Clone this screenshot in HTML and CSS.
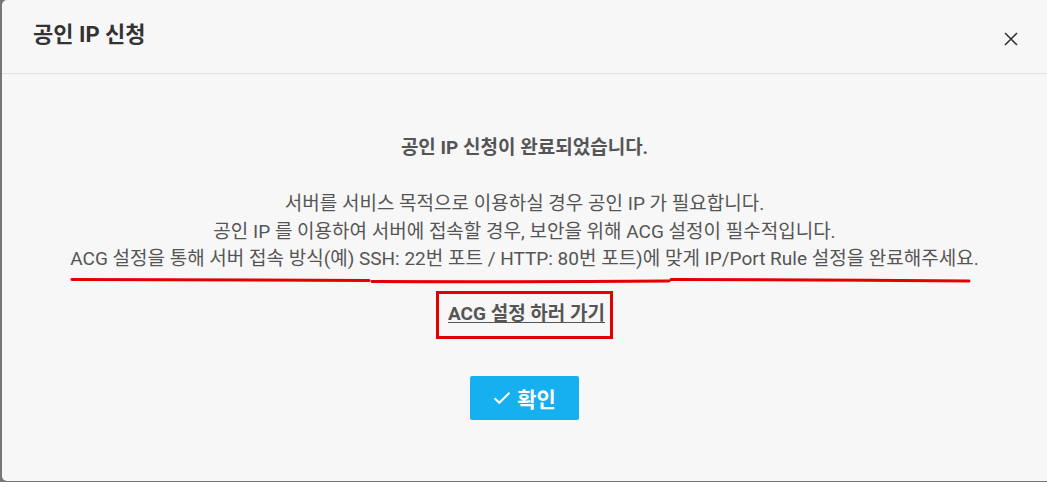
FILE: index.html
```html
<!DOCTYPE html>
<html lang="ko">
<head>
<meta charset="utf-8">
<link rel="stylesheet" href="styles.css">
</head>
<body>
<div class="dialog">
  <div class="header">
    <h1 class="title">공인 IP 신청</h1>
    <span class="close" aria-label="닫기">
      <svg width="14" height="14" viewBox="0 0 14 14"><path d="M1 1 L13 13 M13 1 L1 13" stroke="#333" stroke-width="1.6" fill="none"/></svg>
    </span>
  </div>
  <div class="body">
    <p class="heading">공인 IP 신청이 완료되었습니다.</p>
    <div class="desc">
      <p>서버를 서비스 목적으로 이용하실 경우 공인 IP 가 필요합니다.</p>
      <p>공인 IP 를 이용하여 서버에 접속할 경우, 보안을 위해 ACG 설정이 필수적입니다.</p>
      <p>ACG 설정을 통해 서버 접속 방식(예) SSH: 22번 포트 / HTTP: 80번 포트)에 맞게 IP/Port Rule 설정을 완료해주세요.</p>
      <svg class="marks" width="1047" height="12" viewBox="0 0 1047 12">
        <path d="M72 3.5 Q220 4.5 369 4.5" stroke="#e30000" stroke-width="3" fill="none" stroke-linecap="round"/>
        <path d="M372 5.5 Q520 6 669 5" stroke="#e30000" stroke-width="3" fill="none" stroke-linecap="round"/>
        <path d="M671 3.5 Q820 3.5 969 5" stroke="#e30000" stroke-width="3" fill="none" stroke-linecap="round"/>
      </svg>
    </div>
    <div class="link-wrap"><a class="link" href="#">ACG 설정 하러 가기</a></div>
    <button class="ok" type="button">
      <svg width="18" height="14" viewBox="0 0 18 14"><path d="M1.5 7.2 L6.3 11.8 L16.5 1.8" stroke="#fff" stroke-width="2" fill="none"/></svg>
      <span>확인</span>
    </button>
  </div>
</div>
</body>
</html>
```
FILE: styles.css
```css
html, body {
  margin: 0;
  padding: 0;
  background: #777;
}
body {
  font-family: Roboto, "Noto Sans CJK KR", sans-serif;
  color: #555;
}
.dialog {
  margin-left: 2px;
  height: 481px;
  background: #f7f7f7;
  border-radius: 5px 0 0 5px;
  display: flex;
  flex-direction: column;
}
.header {
  height: 73px;
  border-bottom: 1px solid #e2e2e2;
  display: flex;
  align-items: center;
  justify-content: space-between;
  padding: 0 29px 0 31px;
  box-sizing: content-box;
}
.title {
  margin: 0;
  font-size: 22px;
  font-weight: 700;
  color: #333;
  line-height: 28px;
  padding-bottom: 4px;
}
.close {
  display: flex;
  padding-top: 4px;
}
.body {
  display: flex;
  flex-direction: column;
  align-items: center;
  padding-top: 61px;
}
.heading {
  margin: 0;
  font-size: 19px;
  font-weight: 700;
  line-height: 26px;
  color: #555;
}
.desc {
  position: relative;
  margin-top: 29px;
  text-align: center;
  font-size: 19px;
  line-height: 27.5px;
  width: 100%;
}
.desc p {
  margin: 0;
}
.marks {
  position: absolute;
  left: -2px;
  top: 86px;
}
.link-wrap {
  margin-top: 18px;
  border: 3px solid #e30000;
  padding: 9px 5px 10px 9px;
  line-height: 22px;
}
.link {
  font-size: 19px;
  font-weight: 700;
  color: #555;
  text-decoration: underline;
  text-underline-offset: 2px;
}
.ok {
  margin-top: 37px;
  width: 109px;
  height: 44px;
  border: none;
  border-radius: 2px;
  background: #16b0f0;
  color: #fff;
  font-family: Roboto, "Noto Sans CJK KR", sans-serif;
  font-size: 21px;
  font-weight: 700;
  display: flex;
  align-items: center;
  justify-content: center;
  gap: 6px;
  padding: 0;
}
```
